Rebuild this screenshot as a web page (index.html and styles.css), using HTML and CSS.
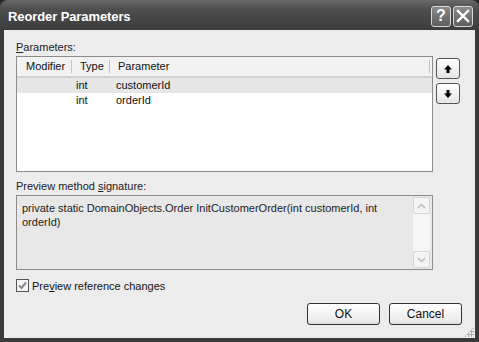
FILE: index.html
```html
<!DOCTYPE html>
<html>
<head>
<meta charset="utf-8">
<link rel="stylesheet" href="styles.css">
</head>
<body>
<div class="window">
  <div class="titlebar">
    <span class="title">Reorder Parameters</span>
    <div class="tbtns">
      <div class="tbtn">?</div>
      <div class="tbtn"><svg width="14" height="14" viewBox="0 0 14 14"><path d="M2 2 L12 12 M12 2 L2 12" stroke="#fff" stroke-width="2.4" stroke-linecap="square"/></svg></div>
    </div>
  </div>
  <div class="body">
    <div class="label"><u>P</u>arameters:</div>
    <div class="paramrow">
      <div class="list">
        <div class="lhead">
          <div class="hc c1">Modifier</div>
          <div class="hc c2">Type</div>
          <div class="hc c3">Parameter</div>
          <div class="hc c4"></div>
        </div>
        <div class="lrow sel"><div class="c1"></div><div class="c2">int</div><div class="c3">customerId</div></div>
        <div class="lrow"><div class="c1"></div><div class="c2">int</div><div class="c3">orderId</div></div>
      </div>
      <div class="arrows">
        <div class="abtn"><svg width="10" height="10" viewBox="0 0 10 10"><path d="M5 1 L9 5.5 L6.5 5.5 L6.5 9 L3.5 9 L3.5 5.5 L1 5.5 Z" fill="#000"/></svg></div>
        <div class="abtn"><svg width="10" height="10" viewBox="0 0 10 10"><path d="M5 9 L9 4.5 L6.5 4.5 L6.5 1 L3.5 1 L3.5 4.5 L1 4.5 Z" fill="#000"/></svg></div>
      </div>
    </div>
    <div class="label l2">Preview method <u>s</u>ignature:</div>
    <div class="preview">
      <div class="ptext">private static DomainObjects.Order InitCustomerOrder(int customerId, int orderId)</div>
      <div class="sbar">
        <div class="sarr"><svg width="9" height="6" viewBox="0 0 9 6"><path d="M1 5 L4.5 1.5 L8 5" stroke="#bbb" stroke-width="1.5" fill="none"/></svg></div>
        <div class="strack"></div>
        <div class="sarr"><svg width="9" height="6" viewBox="0 0 9 6"><path d="M1 1 L4.5 4.5 L8 1" stroke="#bbb" stroke-width="1.5" fill="none"/></svg></div>
      </div>
    </div>
    <div class="check">
      <div class="cbox"><svg width="11" height="11" viewBox="0 0 11 11"><path d="M2 5.5 L4.5 8 L9 2.5" stroke="#888" stroke-width="2" fill="none"/></svg></div>
      <span>Pre<u>v</u>iew reference changes</span>
    </div>
    <div class="buttons">
      <div class="btn">OK</div>
      <div class="btn">Cancel</div>
    </div>
    <div class="grip"></div>
  </div>
</div>
</body>
</html>
```
FILE: styles.css
```css
html, body { margin: 0; padding: 0; background: #2a2a2a; }
body { width: 479px; height: 342px; overflow: hidden; font-family: "Liberation Sans", Arial, sans-serif; font-size: 11px; color: #111; }
.window { width: 479px; height: 342px; display: flex; flex-direction: column; background: #3a3a3a; border-radius: 8px 8px 0 0; overflow: hidden; }
.titlebar { height: 30px; flex: none; display: flex; align-items: center; justify-content: space-between; padding: 2px 6px 0 8px; box-sizing: border-box; background: linear-gradient(#6a6a6a 0%, #4e4e4e 30%, #444 70%, #3c3c3c 100%); }
.title { color: #fff; font-weight: bold; font-size: 13px; letter-spacing: -0.1px; padding-top: 1px; }
.tbtns { display: flex; gap: 2px; }
.tbtn { width: 20px; height: 21px; border: 1px solid #d8d8d8; border-radius: 3px; background: linear-gradient(#8a8a8a, #5e5e5e); color: #fff; font-weight: bold; font-size: 16px; display: flex; align-items: center; justify-content: center; box-sizing: border-box; }
.body { position: relative; flex: 1; margin: 0 4px 4px 4px; background: #ececec; padding: 10px 12px 0 12px; }
.label { height: 15px; line-height: 15px; color: #222; }
.l2 { margin-top: 7px; height: 16px; }
.paramrow { display: flex; gap: 3px; margin-top: 1px; }
.list { width: 415px; height: 114px; border: 1px solid #8c8c8c; background: #fff; box-sizing: content-box; }
.lhead { display: flex; height: 19px; background: #f2f2f2; border-bottom: 2px solid #d0d0d0; align-items: center; }
.hc { height: 13px; line-height: 13px; border-right: 1px solid #c4c4c4; box-sizing: border-box; }
.c1 { width: 55px; padding-left: 9px; box-sizing: border-box; flex: none; }
.c2 { width: 38px; padding-left: 8px; box-sizing: border-box; flex: none; }
.c3 { width: 320px; padding-left: 8px; box-sizing: border-box; flex: none; }
.c4 { flex: 1; border-right: none; }
.lrow { display: flex; height: 15px; line-height: 15px; }
.lrow .c2 { padding-left: 4px; }
.lrow .c3 { padding-left: 6px; }
.lrow.sel { background: #e6e6e6; }
.arrows { display: flex; flex-direction: column; gap: 4px; margin-top: 2px; }
.abtn { width: 24px; height: 21px; border: 1px solid #555; border-radius: 3px; background: linear-gradient(#fff, #e4e4e4); display: flex; align-items: center; justify-content: center; box-sizing: border-box; }
.preview { width: 415px; height: 73px; border: 1px solid #8c8c8c; background: #e8e8e8; display: flex; }
.ptext { flex: 1; padding: 5px 0 0 5px; line-height: 14px; color: #222; }
.sbar { width: 17px; margin: 1px 2px 1px 0; display: flex; flex-direction: column; }
.sarr { height: 17px; border: 1px solid #d6d6d6; border-radius: 2px; background: #f4f4f4; display: flex; align-items: center; justify-content: center; box-sizing: border-box; }
.strack { flex: 1; background: #f6f6f6; }
.check { display: flex; align-items: center; gap: 3px; margin-top: 8px; height: 15px; }
.cbox { width: 13px; height: 13px; border: 1px solid #555; background: #f4f4f4; box-sizing: border-box; display: flex; align-items: center; justify-content: center; }
.buttons { display: flex; justify-content: flex-end; gap: 9px; margin-top: 10px; padding-right: 1px; }
.btn { width: 73px; height: 22px; border: 1px solid #333; border-radius: 3px; background: linear-gradient(#fff, #ececec 80%, #dcdcdc); display: flex; align-items: center; justify-content: center; box-sizing: border-box; font-size: 12px; }
.grip { position: absolute; right: 1px; bottom: 1px; width: 10px; height: 10px; background: radial-gradient(circle, #aaa 1px, transparent 1.3px) 0 0 / 3px 3px; clip-path: polygon(100% 0, 100% 100%, 0 100%); }
```
